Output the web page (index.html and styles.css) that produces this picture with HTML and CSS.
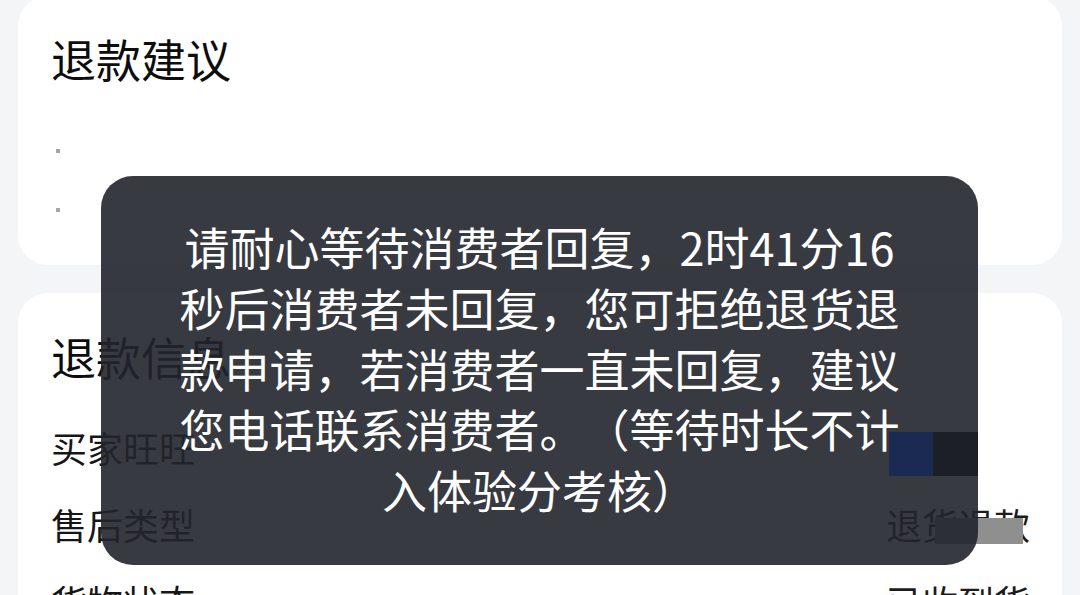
FILE: index.html
```html
<!DOCTYPE html>
<html lang="zh-CN">
<head>
<meta charset="utf-8">
<title>退款详情</title>
<link rel="stylesheet" href="styles.css">
</head>
<body>
<div class="page">
  <section class="card card-advice">
    <h2 class="card-title">退款建议</h2>
    <ul class="advice-list">
      <li class="advice-item"></li>
      <li class="advice-item"></li>
    </ul>
  </section>
  <section class="card card-info">
    <h2 class="card-title">退款信息</h2>
    <div class="info-rows">
      <div class="info-row"><span class="label">买家旺旺</span><span class="value"></span></div>
      <div class="info-row"><span class="label">售后类型</span><span class="value">退货退款<span class="value-mask"></span></span></div>
      <div class="info-row"><span class="label">货物状态</span><span class="value">已收到货</span></div>
    </div>
  </section>
</div>
<div class="toast">
  <p class="toast-text">请耐心等待消费者回复，2时41分16<br>秒后消费者未回复，您可拒绝退货退<br>款申请，若消费者一直未回复，建议<br>您电话联系消费者。（等待时长不计<br>入体验分考核）</p>
</div>
<div class="redact">
  <span class="redact-a"></span><span class="redact-b"></span>
</div>
</body>
</html>
```

FILE: styles.css
```css
html, body {
  margin: 0;
  padding: 0;
  height: 100%;
  overflow: hidden;
}

body {
  background: #f4f5f7;
  font-family: "Noto Sans CJK SC", "Noto Sans", sans-serif;
  color: #141414;
  text-spacing-trim: space-all;
}

.page {
  padding: 0 18px;
  display: flex;
  flex-direction: column;
}

.card {
  background: #ffffff;
  border-radius: 30px;
  padding: 33px 33px 26px;
}

.card-advice {
  margin-top: -4px;
}

.card-info {
  margin-top: 28px;
  padding-top: 34px;
}

.card-title {
  margin: 0;
  font-size: 45px;
  line-height: 60px;
  font-weight: 400;
  color: #0d0d0d;
}

.advice-list {
  list-style: none;
  margin: 32px 0 0;
  padding: 0;
}

.advice-item {
  height: 59px;
  display: flex;
  align-items: center;
  padding-left: 5px;
}

.advice-item::before {
  content: "";
  width: 4px;
  height: 4px;
  background: #a6a6a6;
}

.info-rows {
  margin-top: 22px;
  display: flex;
  flex-direction: column;
}

.info-row {
  display: flex;
  justify-content: space-between;
  align-items: center;
  font-size: 36px;
  line-height: 77px;
}

.label {
  color: #161616;
}

.value {
  position: relative;
  color: #1c1c1c;
  margin-right: -1px;
}

.value-mask {
  position: absolute;
  left: 49px;
  top: 32px;
  width: 88px;
  height: 26px;
  background: #8f8f8f;
}

.toast {
  position: absolute;
  left: 101px;
  top: 176px;
  width: 877px;
  height: 389px;
  box-sizing: border-box;
  padding-top: 41px;
  border-radius: 32px;
  background: rgba(34, 37, 44, 0.9);
}

.toast-text {
  margin: 0;
  text-align: center;
  color: #ffffff;
  font-size: 45px;
  line-height: 60.75px;
  font-weight: 400;
  text-spacing-trim: space-all;
}

.redact {
  position: absolute;
  left: 889px;
  top: 432px;
  height: 44px;
  display: flex;
}

.redact-a {
  width: 44px;
  background: #1b2a52;
}

.redact-b {
  width: 45px;
  background: #1d1f26;
}
```
